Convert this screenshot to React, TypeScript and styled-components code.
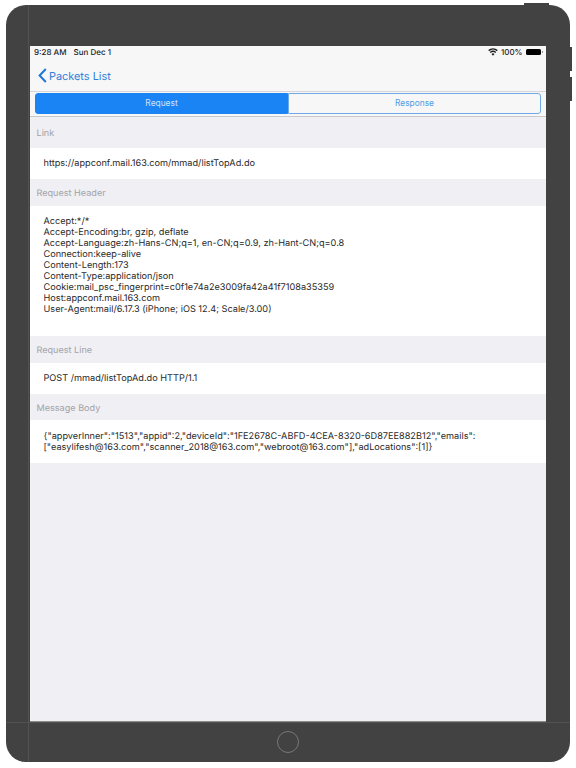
import { useState } from 'react';
import styled, { createGlobalStyle } from 'styled-components';

const GlobalStyle = createGlobalStyle`
    html, body {
        margin: 0;
        padding: 0;
        background: #fff;
    }
    body {
        font-family: Inter, "Liberation Sans", sans-serif;
        text-rendering: geometricPrecision;
    }
`;

const Page = styled.div`
    width: 576px;
    height: 768px;
    padding: 5px 6px 6px;
    box-sizing: border-box;
    overflow: hidden;
`;

const Device = styled.div`
    position: relative;
    height: 757px;
    box-sizing: border-box;
    padding: 41px 24px 0;
    background: #424242;
    border-radius: 20px;
`;

const TopButton = styled.div`
    position: absolute;
    top: -2px;
    right: 21px;
    width: 25px;
    height: 2px;
    background: #424242;
`;

const VolumeButton = styled.div<{ $top: number }>`
    position: absolute;
    top: ${(props) => props.$top}px;
    right: -2px;
    width: 2px;
    height: 23.5px;
    background: #424242;
`;

const BezelLine = styled.div`
    position: absolute;
    top: 0;
    bottom: 0;
    left: 22px;
    width: 1px;
    background: #525252;
`;

const BezelRule = styled.div`
    position: absolute;
    top: 717px;
    left: 0;
    right: 0;
    height: 1px;
    background: #525252;
`;

const Screen = styled.div`
    position: relative;
    height: 675px;
    display: flex;
    flex-direction: column;
    background: #efeff4;
    box-shadow: 0 1px 0 #8a8a8a;
`;

const NavArea = styled.div`
    background: #f7f7f8;
    border-bottom: 1px solid #c9c9cd;
`;

const StatusBar = styled.div`
    height: 13px;
    box-sizing: border-box;
    padding: 0 4px 1px;
    display: flex;
    align-items: center;
    justify-content: space-between;
    font-size: 8px;
    font-weight: 500;
    color: #1c1c1e;
`;

const StatusGroup = styled.div`
    display: flex;
    align-items: center;
    gap: 3px;
`;

const TimeLabel = styled.span`
    margin-right: 4px;
`;

const Battery = styled.div`
    position: relative;
    width: 15.5px;
    height: 6px;
    background: #000;
    border-radius: 1.5px;
    margin-right: 1px;
    &::after {
        content: '';
        position: absolute;
        right: -1.5px;
        top: 2px;
        width: 1px;
        height: 2px;
        background: #999;
    }
`;

const NavBar = styled.div`
    height: 33px;
    padding: 1px 0 0 8px;
    display: flex;
    align-items: center;
    gap: 2px;
    color: #2f7fd8;
    font-size: 10.9px;
    border-bottom: 1px solid #d6d6da;
    box-sizing: border-box;
`;

const SegmentBar = styled.div`
    padding: 0.5px 5px 2.5px;
    display: flex;
`;

const Segment = styled.button<{ $active: boolean }>`
    flex: 1;
    height: 21px;
    padding: 0;
    font-family: inherit;
    font-size: 8.4px;
    color: ${(props) => (props.$active ? '#cfe3fb' : '#4f9be6')};
    background: ${(props) => (props.$active ? '#1a84f5' : '#f7f7f8')};
    border: 1px solid ${(props) => (props.$active ? '#1a84f5' : '#6fa9e8')};
    border-radius: ${(props) => (props.$active ? '3px 0 0 3px' : '0 3px 3px 0')};
`;

const SectionHeader = styled.div<{ $height: number }>`
    height: ${(props) => props.$height}px;
    box-sizing: border-box;
    padding: 2px 0 0 6.5px;
    display: flex;
    align-items: center;
    font-size: 9.1px;
    color: #a3a3a8;
`;

const SectionBody = styled.div<{ $height: number }>`
    height: ${(props) => props.$height}px;
    box-sizing: border-box;
    padding: 1px 13.5px 0;
    background: #fff;
    font-size: 9.17px;
    line-height: 11.1px;
    color: #2a2a2a;
    display: flex;
    align-items: center;
`;

const HeaderLines = styled.div`
    margin-top: 9px;
    align-self: flex-start;
    white-space: pre-line;
`;

const HomeButton = styled.div`
    position: absolute;
    left: 271px;
    bottom: 9px;
    width: 20px;
    height: 20px;
    border: 1px solid #777;
    border-radius: 50%;
`;

const headerText = `Accept:*/*
Accept-Encoding:br, gzip, deflate
Accept-Language:zh-Hans-CN;q=1, en-CN;q=0.9, zh-Hant-CN;q=0.8
Connection:keep-alive
Content-Length:173
Content-Type:application/json
Cookie:mail_psc_fingerprint=c0f1e74a2e3009fa42a41f7108a35359
Host:appconf.mail.163.com
User-Agent:mail/6.17.3 (iPhone; iOS 12.4; Scale/3.00)`;

const bodyText =
    '{"appverInner":"1513","appid":2,"deviceId":"1FE2678C-ABFD-4CEA-8320-6D87EE882B12","emails":["easylifesh@163.com","scanner_2018@163.com","webroot@163.com"],"adLocations":[1]}';

const App = () => {
    const [tab, setTab] = useState('request');
    return (
        <Page>
            <GlobalStyle />
            <Device>
                <TopButton />
                <VolumeButton $top={42} />
                <VolumeButton $top={72} />
                <BezelLine />
                <BezelRule />
                <Screen>
                    <NavArea>
                        <StatusBar>
                            <StatusGroup>
                                <TimeLabel>9:28 AM</TimeLabel>
                                <span>Sun Dec 1</span>
                            </StatusGroup>
                            <StatusGroup>
                                <svg width="10" height="8" viewBox="0 0 20 15" fill="#1c1c1e">
                                    <path d="M10 15l-3-3.6a4.6 4.6 0 0 1 6 0z" />
                                    <path d="M5.4 9.4L3.6 7.3a10 10 0 0 1 12.8 0l-1.8 2.1a7.2 7.2 0 0 0-9.2 0z" />
                                    <path d="M2.4 5.8L.4 3.6a15 15 0 0 1 19.2 0l-2 2.2a12 12 0 0 0-15.2 0z" />
                                </svg>
                                <span>100%</span>
                                <Battery />
                            </StatusGroup>
                        </StatusBar>
                        <NavBar>
                            <svg width="9" height="15" viewBox="0 0 9 15" fill="none" stroke="#1f78d6" strokeWidth="2">
                                <path d="M7.8 1L1.6 7.5l6.2 6.5" />
                            </svg>
                            Packets List
                        </NavBar>
                        <SegmentBar>
                            <Segment $active={tab === 'request'} onClick={() => setTab('request')}>
                                Request
                            </Segment>
                            <Segment $active={tab === 'response'} onClick={() => setTab('response')}>
                                Response
                            </Segment>
                        </SegmentBar>
                    </NavArea>
                    <SectionHeader $height={31}>Link</SectionHeader>
                    <SectionBody $height={30.5}>https://appconf.mail.163.com/mmad/listTopAd.do</SectionBody>
                    <SectionHeader $height={27}>Request Header</SectionHeader>
                    <SectionBody $height={130.5}>
                        <HeaderLines>{headerText}</HeaderLines>
                    </SectionBody>
                    <SectionHeader $height={26.5}>Request Line</SectionHeader>
                    <SectionBody $height={31.5}>POST /mmad/listTopAd.do HTTP/1.1</SectionBody>
                    <SectionHeader $height={26}>Message Body</SectionHeader>
                    <SectionBody $height={42.5}>
                        <div>{bodyText.slice(0, 91)}<br />{bodyText.slice(91)}</div>
                    </SectionBody>
                </Screen>
                <HomeButton />
            </Device>
        </Page>
    );
};

export default App;
